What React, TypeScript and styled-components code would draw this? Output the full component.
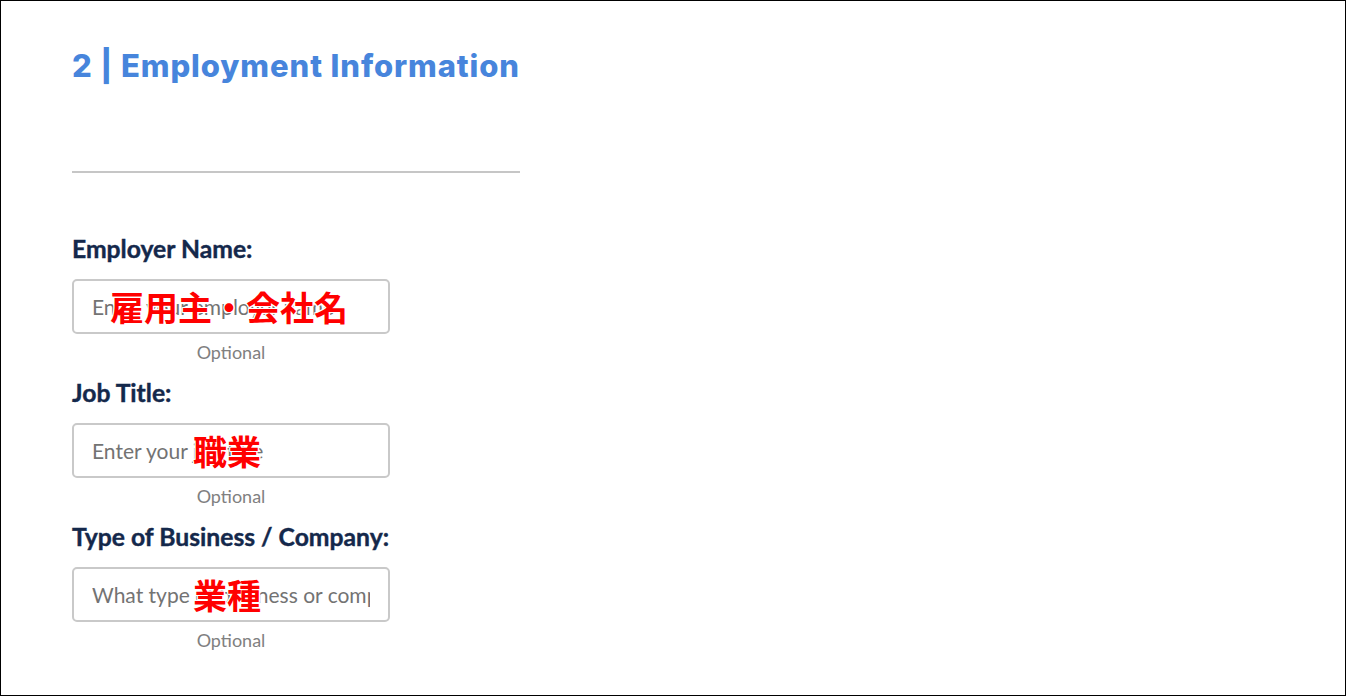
import * as React from 'react';
import styled, { createGlobalStyle } from 'styled-components';

const GlobalStyle = createGlobalStyle`
  html, body {
    margin: 0;
    padding: 0;
    background: #fff;
  }
  * {
    box-sizing: border-box;
  }
`;

interface IField {
  label: string;
  placeholder: string;
  note: string;
  noteLeft: number;
}

const fields: IField[] = [
  { label: 'Employer Name:', placeholder: 'Enter your employer name', note: '雇用主・会社名', noteLeft: 38 },
  { label: 'Job Title:', placeholder: 'Enter your job title', note: '職業', noteLeft: 121 },
  { label: 'Type of Business / Company:', placeholder: 'What type of business or company', note: '業種', noteLeft: 121 },
];

const Field = (props: IField) => (
  <FieldGroup>
    <Label>{props.label}</Label>
    <InputWrapper>
      <TextInput type='text' placeholder={props.placeholder} />
      <Note style={{ left: props.noteLeft }}>{props.note}</Note>
    </InputWrapper>
    <Hint>Optional</Hint>
  </FieldGroup>
);

export default function App() {
  return (
    <>
      <GlobalStyle />
      <Page>
        <Heading>2 | Employment Information</Heading>
        <Divider />
        <Form>
          {fields.map((f) => (
            <Field key={f.label} {...f} />
          ))}
        </Form>
      </Page>
    </>
  );
}

const Page = styled.div`
  width: 1346px;
  height: 696px;
  border: 1px solid #000;
  padding: 47px 0 0 71px;
  overflow: hidden;
`;

const Heading = styled.h2`
  margin: 0;
  font-family: Inter, 'Open Sans', sans-serif;
  font-weight: 800;
  font-size: 31px;
  line-height: 36px;
  color: #4785dc;
  letter-spacing: 0.9px;
  white-space: nowrap;
`;

const Divider = styled.hr`
  width: 448px;
  height: 2px;
  margin: 87px 0 0;
  border: none;
  background: #c6c6c6;
`;

const Form = styled.div`
  display: flex;
  flex-direction: column;
  gap: 18px;
  margin-top: 63px;
`;

const FieldGroup = styled.div`
  display: flex;
  flex-direction: column;
  width: 318px;
`;

const Label = styled.label`
  font-family: Lato, sans-serif;
  font-weight: 700;
  font-size: 24.7px;
  line-height: 26px;
  color: #14284b;
  -webkit-text-stroke: 0.4px #14284b;
  white-space: nowrap;
`;

const InputWrapper = styled.div`
  position: relative;
  margin-top: 17px;
`;

const TextInput = styled.input`
  display: block;
  width: 318px;
  height: 55px;
  border: 2px solid #c9c9c9;
  border-radius: 5px;
  padding: 0 18px;
  font-family: Lato, sans-serif;
  font-size: 21px;
  color: #333;
  background: #fff;
  outline: none;
  &::placeholder {
    color: #737373;
  }
`;

const Note = styled.span`
  position: absolute;
  top: 50%;
  transform: translateY(-50%);
  font-family: 'Noto Sans CJK JP', sans-serif;
  font-weight: 700;
  font-size: 34px;
  line-height: 1;
  color: #ff0000;
  white-space: nowrap;
  pointer-events: none;
  text-shadow: 1px 0 #fff, -1px 0 #fff, 0 1px #fff, 0 -1px #fff, 1px 1px #fff, -1px -1px #fff,
    1px -1px #fff, -1px 1px #fff;
`;

const Hint = styled.div`
  margin-top: 8px;
  font-family: Lato, sans-serif;
  font-size: 18px;
  line-height: 20px;
  color: #808080;
  text-align: center;
`;
